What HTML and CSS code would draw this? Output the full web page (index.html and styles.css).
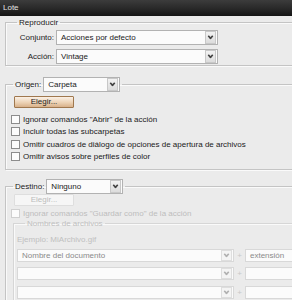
FILE: index.html
```html
<!DOCTYPE html>
<html lang="es">
<head>
    <meta charset="UTF-8">
    <title>Lote</title>
    <link rel="stylesheet" href="styles.css">
</head>
<body>
    <div class="window">
        <div class="titlebar">Lote</div>

        <div class="content">
            <fieldset class="group play">
                <legend>Reproducir</legend>
                <div class="field">
                    <span class="label">Conjunto:</span>
                    <div class="select wide"><span>Acciones por defecto</span><i class="arrow"></i></div>
                </div>
                <div class="field">
                    <span class="label">Acción:</span>
                    <div class="select wide"><span>Vintage</span><i class="arrow"></i></div>
                </div>
            </fieldset>

            <fieldset class="group source">
                <legend>
                    <span class="legend-label">Origen:</span>
                    <div class="select small"><span>Carpeta</span><i class="arrow"></i></div>
                </legend>
                <button class="btn">Elegir...</button>
                <ul class="checks">
                    <li><span class="box"></span>Ignorar comandos "Abrir" de la acción</li>
                    <li><span class="box"></span>Incluir todas las subcarpetas</li>
                    <li><span class="box"></span>Omitir cuadros de diálogo de opciones de apertura de archivos</li>
                    <li><span class="box"></span>Omitir avisos sobre perfiles de color</li>
                </ul>
            </fieldset>

            <fieldset class="group dest">
                <legend>
                    <span class="legend-label">Destino:</span>
                    <div class="select small"><span>Ninguno</span><i class="arrow"></i></div>
                </legend>
                <button class="btn" disabled>Elegir...</button>
                <ul class="checks disabled">
                    <li><span class="box"></span>Ignorar comandos "Guardar como" de la acción</li>
                </ul>

                <fieldset class="group names">
                    <legend>Nombres de archivos</legend>
                    <div class="example">Ejemplo: MiArchivo.gif</div>
                    <div class="name-row">
                        <div class="select off"><span>Nombre del documento</span><i class="arrow"></i></div>
                        <span class="plus">+</span>
                        <div class="select off ext"><span>extensión</span></div>
                    </div>
                    <div class="name-row">
                        <div class="select off"><span></span><i class="arrow"></i></div>
                        <span class="plus">+</span>
                        <div class="select off ext"><span></span></div>
                    </div>
                    <div class="name-row">
                        <div class="select off"><span></span><i class="arrow"></i></div>
                        <span class="plus">+</span>
                        <div class="select off ext"><span></span></div>
                    </div>
                </fieldset>
            </fieldset>
        </div>
    </div>
</body>
</html>
```

FILE: styles.css
```css
html, body {
    margin: 0;
    padding: 0;
}
body {
    width: 292px;
    height: 300px;
    overflow: hidden;
    background: #ebebeb;
    font-family: "Liberation Sans", Arial, sans-serif;
    font-size: 8px;
    color: #1a1a1a;
}
.titlebar {
    height: 16px;
    line-height: 15px;
    padding-left: 3px;
    color: #e4e4e4;
    background: linear-gradient(#3c3c3c, #262626 60%, #141414);
    font-size: 8px;
}
.content {
    padding: 0 0 0 5px;
    width: 330px;
}
.group {
    margin: 0;
    padding: 0;
    border: 1px solid #c4c4c4;
    box-shadow: inset 1px 1px 0 #fafafa, 1px 1px 0 #fafafa;
    min-width: 0;
}
.group legend {
    padding: 0 2px;
    margin-left: 11px;
    line-height: 9px;
}
.play {
    margin-top: 2px;
    padding: 3px 0 4px 0;
    height: 39px;
}
.field {
    display: flex;
    align-items: center;
    margin-bottom: 4px;
}
.label {
    width: 48px;
    text-align: right;
    padding-right: 2px;
}
.select {
    display: flex;
    align-items: center;
    justify-content: space-between;
    height: 15px;
    box-sizing: border-box;
    border: 1px solid #b2b2b2;
    background: #fbfbfb;
    padding-left: 4px;
}
.select.wide {
    width: 162px;
}
.select.small {
    width: 77px;
}
.arrow {
    width: 9px;
    height: 11px;
    margin-right: 1px;
    border: 1px solid #c8c8c8;
    background: linear-gradient(#f2f2f2, #dcdcdc) ;
    position: relative;
}
.arrow::after {
    content: "";
    position: absolute;
    left: 2px;
    top: 2px;
    width: 3px;
    height: 3px;
    border-right: 2px solid #404040;
    border-bottom: 2px solid #404040;
    transform: rotate(45deg) scale(0.8);
}
.source, .dest {
    margin-top: 11px;
    padding: 0 0 6px 0;
}
.source legend, .dest legend {
    display: flex;
    align-items: center;
    margin-left: 7px;
    padding: 0 2px;
}
.legend-label {
    padding-right: 2px;
}
.btn {
    display: block;
    margin: 4px 0 0 8px;
    width: 60px;
    height: 12px;
    padding: 0;
    font-family: inherit;
    font-size: 8px;
    line-height: 10px;
    color: #1e1e1e;
    border: 1px solid #a0784e;
    border-radius: 1px;
    background: linear-gradient(#fbf1e6, #ecd2b5 55%, #d8b18a);
}
.btn:disabled {
    margin-top: 0;
    border-color: #dedede;
    background: #f6f6f6;
    color: #bcbcbc;
}
.checks {
    list-style: none;
    margin: 5px 0 0 5px;
    padding: 0;
}
.checks li {
    display: flex;
    align-items: center;
    height: 12.5px;
}
.box {
    width: 7px;
    height: 7px;
    border: 1px solid #8c8c8c;
    background: #fcfcfc;
    margin-right: 3px;
}
.checks.disabled {
    margin-top: 1px;
    color: #bdbdbd;
}
.checks.disabled .box {
    border-color: #d0d0d0;
}
.dest {
    margin-top: 9px;
    border-bottom: none;
    padding-bottom: 0;
    height: 140px;
}
.names {
    margin: -1px 0 0 7px;
    padding: 7px 0 0 3px;
    border-color: #d6d6d6;
    color: #c0c0c0;
    border-bottom: none;
}
.names legend {
    margin-left: 8px;
}
.example {
    margin-bottom: 5px;
}
.name-row {
    display: flex;
    align-items: center;
    margin-bottom: 5.5px;
}
.select.off {
    width: 217px;
    height: 13px;
    border-color: #d8d8d8;
    color: #8a8a8a;
}
.select.off .arrow {
    height: 9px;
    border-color: #dedede;
    background: #f4f4f4;
}
.select.off .arrow::after {
    border-color: #b0b0b0;
    top: 1px;
}
.plus {
    width: 11px;
    text-align: center;
    color: #c8c8c8;
}
.select.ext {
    width: 60px;
}
```
